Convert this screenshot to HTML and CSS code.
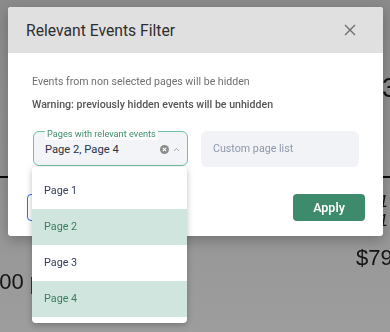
FILE: index.html
```html
<!DOCTYPE html>
<html>
<head>
	<title>Relevant Events Filter</title>
	<link rel="stylesheet" href="styles.css">
</head>
<body>
	<div class="page">
		<div class="pg-head"><span class="pg-big">38</span></div>
		<div class="pg-rule"></div>
		<div class="pg-rates">
			<span>1</span>
			<span>1</span>
		</div>
		<div class="pg-price">$79.00</div>
		<div class="pg-price pg-left">100 per</div>
	</div>

	<div class="overlay"></div>

	<div class="modal">
		<div class="modal-header">
			<span class="modal-title">Relevant Events Filter</span>
			<svg class="close" width="12" height="12" viewBox="0 0 12 12">
				<path d="M1 1 L11 11 M11 1 L1 11" stroke="#6b6b6b" stroke-width="1.3" fill="none"/>
			</svg>
		</div>
		<div class="modal-body">
			<p class="info">Events from non selected pages will be hidden</p>
			<p class="info warn">Warning: previously hidden events will be unhidden</p>

			<div class="fields">
				<div class="select">
					<span class="legend">Pages with relevant events</span>
					<span class="value">Page 2, Page 4</span>
					<svg class="clear" width="9" height="9" viewBox="0 0 9 9">
						<circle cx="4.5" cy="4.5" r="4.5" fill="#8c8c8c"/>
						<path d="M2.8 2.8 L6.2 6.2 M6.2 2.8 L2.8 6.2" stroke="#fff" stroke-width="1.1"/>
					</svg>
					<svg class="chevron" width="7" height="5" viewBox="0 0 7 5">
						<path d="M1 4 L3.5 1.5 L6 4" stroke="#a9a9a9" stroke-width="1" fill="none"/>
					</svg>

					<ul class="menu">
						<li>Page 1</li>
						<li class="selected">Page 2</li>
						<li>Page 3</li>
						<li class="selected">Page 4</li>
					</ul>
				</div>
				<div class="custom">Custom page list</div>
			</div>
		</div>
		<div class="modal-footer">
			<button class="btn-outline">Reset</button>
			<button class="btn-apply">Apply</button>
		</div>
	</div>
</body>
</html>
```

FILE: styles.css
```css
body {
	margin: 0;
	width: 390px;
	height: 332px;
	overflow: hidden;
	position: relative;
	font-family: Roboto, "Noto Sans", sans-serif;
}

/* page underneath the dialog */
.page {
	height: 332px;
	background: #fff;
	font-family: "Liberation Sans", Arial, sans-serif;
	color: #222;
	overflow: hidden;
}
.pg-head {
	display: flex;
	justify-content: flex-end;
	padding-top: 73px;
	height: 30px;
}
.pg-big {
	font-size: 27px;
	margin-right: -22px;
}
.pg-rule {
	margin-top: 73px;
	height: 2px;
	background: #111;
}
.pg-rates {
	display: flex;
	flex-direction: column;
	align-items: flex-end;
	margin-top: 14px;
	font-size: 17px;
	font-style: italic;
	line-height: 19px;
}
.pg-rates span {
	margin-right: 2px;
}
.pg-price {
	font-size: 22px;
	line-height: 26px;
	margin-top: 15px;
	padding-left: 356px;
	white-space: nowrap;
}
.pg-left {
	margin-top: -2px;
	padding-left: 0;
	margin-left: -13px;
}

.overlay {
	position: absolute;
	inset: 0;
	background: linear-gradient(#878787, #9a9a9a);
	opacity: 0.97;
	mix-blend-mode: multiply;
}

/* dialog */
.modal {
	position: absolute;
	left: 8px;
	top: 7px;
	width: 375px;
	height: 229px;
	background: #fff;
	border-radius: 3px;
	box-shadow: 0 4px 14px rgba(0, 0, 0, 0.25);
	display: flex;
	flex-direction: column;
}
.modal-header {
	height: 46px;
	background: #e0e0e0;
	border-radius: 3px 3px 0 0;
	display: flex;
	align-items: center;
	justify-content: space-between;
	padding: 0 27px 0 18px;
}
.modal-title {
	font-size: 15.7px;
	color: #2e2e2e;
}
.modal-body {
	padding: 21px 24px 0 24px;
}
.info {
	margin: 0 0 7px;
	font-size: 10.6px;
	line-height: 16px;
	color: #6f6f6f;
}
.warn {
	font-weight: 500;
	color: #555;
}
.fields {
	display: flex;
	gap: 13px;
	margin-top: 18px;
	padding-left: 1px;
}
.select {
	position: relative;
	width: 155px;
	height: 35px;
	box-sizing: border-box;
	border: 1px solid #6fc2a1;
	border-radius: 6px;
	background: #f2f4f8;
	display: flex;
	align-items: center;
	padding: 2px 7px 0 11px;
}
.legend {
	position: absolute;
	left: 11px;
	top: -4px;
	background: #fff;
	padding: 0 2px;
	border-radius: 2px;
	font-size: 9.2px;
	line-height: 12px;
	color: #3f8d6c;
}
.value {
	flex: 1;
	font-size: 11.2px;
	color: #2b3547;
}
.clear {
	margin-right: 4px;
}
.menu {
	position: absolute;
	left: -2px;
	top: 35px;
	width: 155px;
	margin: 0;
	padding: 6px 0 6px;
	list-style: none;
	background: #fff;
	border-radius: 4px;
	box-shadow: 0 2px 6px rgba(0, 0, 0, 0.25);
	z-index: 2;
}
.menu li {
	height: 36px;
	line-height: 36px;
	padding-left: 12px;
	font-size: 10.8px;
	color: #34405a;
}
.menu li.selected {
	background: #d0e5dd;
	color: #3a7f62;
}
.custom {
	width: 158px;
	height: 36px;
	box-sizing: border-box;
	border-radius: 6px;
	background: #f1f3f7;
	padding-left: 12px;
	line-height: 36px;
	font-size: 10.7px;
	color: #8e99a9;
}
.modal-footer {
	display: flex;
	justify-content: space-between;
	align-items: flex-start;
	margin-top: 27px;
	padding: 0 18px 0 19px;
}
.btn-outline {
	height: 27px;
	width: 80px;
	border: 1px solid #2f6fe0;
	border-radius: 4px;
	background: #fff;
	color: #2f6fe0;
	font-family: inherit;
	font-size: 12px;
}
.btn-apply {
	width: 72px;
	height: 27px;
	border: none;
	border-radius: 4px;
	background: #3d8a6d;
	color: #fff;
	font-family: inherit;
	font-weight: 600;
	font-size: 12.5px;
	cursor: pointer;
}
```
